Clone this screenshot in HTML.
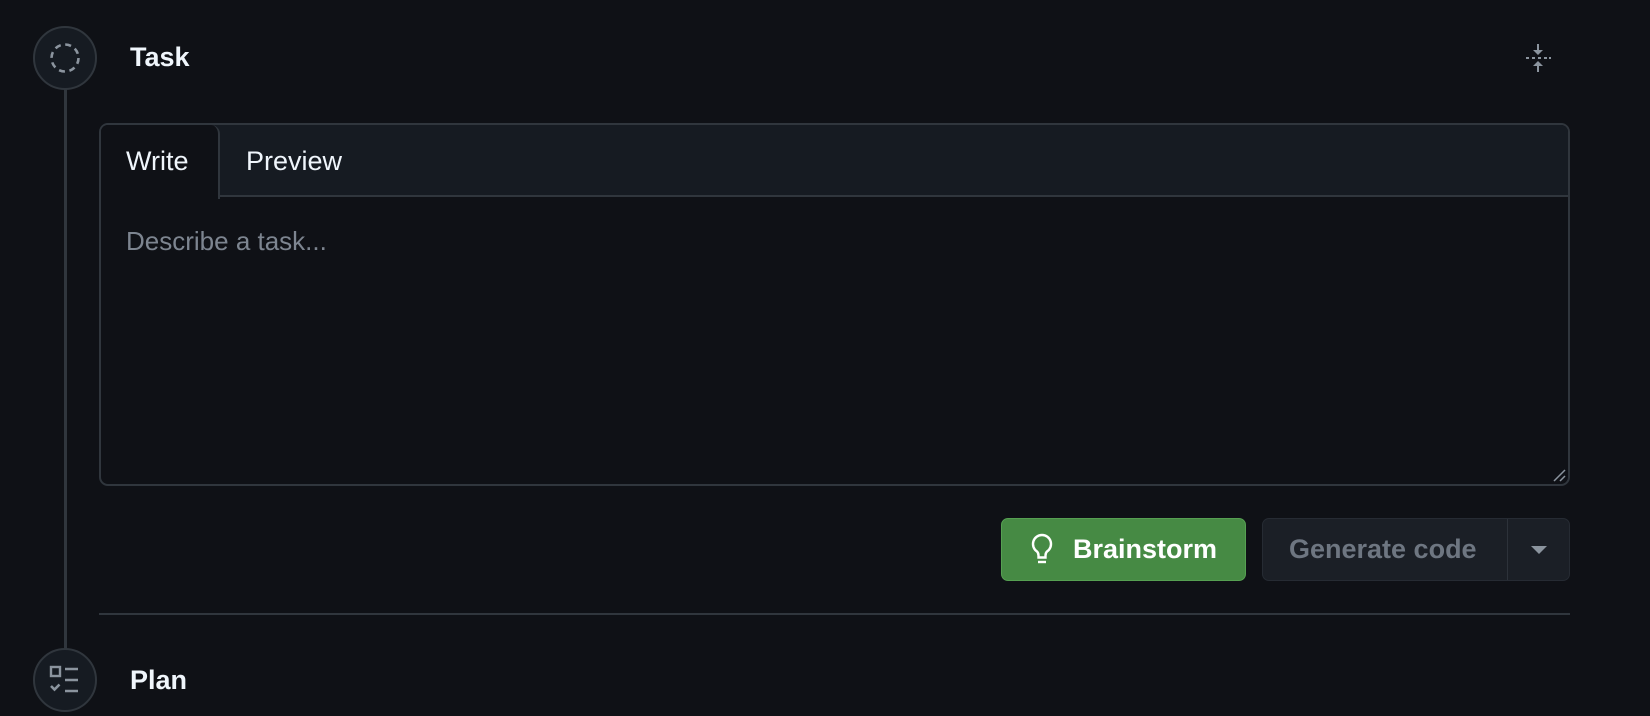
<!DOCTYPE html>
<html><head><meta charset="utf-8"><style>
*{box-sizing:border-box;margin:0;padding:0}
body{width:1650px;height:716px;background:#0f1116;font-family:"Liberation Sans",sans-serif;overflow:hidden;position:relative;color:#f0f6fc}
.abs{position:absolute}
.circ{position:absolute;width:64px;height:64px;border-radius:50%;border:2px solid #30363d;background:#161b22;display:flex;align-items:center;justify-content:center}
.title{position:absolute;font-size:27px;font-weight:bold;color:#f0f6fc}
</style></head><body>
<div class="abs" style="left:64px;top:88px;width:3px;height:562px;background:#30363d"></div>
<div class="circ" style="left:33px;top:26px"><svg width="34" height="34" viewBox="0 0 34 34"><circle cx="17" cy="17" r="13.5" fill="none" stroke="#8b949e" stroke-width="2.6" stroke-dasharray="6 4.6"/></svg></div>
<div class="title" style="left:130px;top:42px">Task</div>
<svg class="abs" style="left:1524px;top:42px" width="28" height="32" viewBox="0 0 28 32"><g fill="#8b949e"><path d="M14 2v8" stroke="#8b949e" stroke-width="2"/><path d="M9 8h10l-5 5z"/><path d="M14 22v8" stroke="#8b949e" stroke-width="2"/><path d="M9 24h10l-5-5z"/><rect x="2" y="15" width="3" height="2"/><rect x="8" y="15" width="3" height="2"/><rect x="14" y="15" width="3" height="2"/><rect x="20" y="15" width="3" height="2"/><rect x="25" y="15" width="2" height="2"/></g></svg>
<div class="abs" style="left:99px;top:123px;width:1471px;height:363px;border:2px solid #30363d;border-radius:9px;overflow:hidden">
  <div class="abs" style="left:0;top:0;right:0;height:72px;background:#161b22;border-bottom:2px solid #30363d"></div>
  <div class="abs" style="left:0;top:0;width:119px;height:74px;background:#0f1116;border-right:2px solid #30363d;border-top-right-radius:9px"></div>
  <div class="abs" style="left:25px;top:21px;font-size:27px;color:#f0f6fc">Write</div>
  <div class="abs" style="left:145px;top:21px;font-size:27px;color:#f0f6fc">Preview</div>
  <div class="abs" style="left:25px;top:101px;font-size:26px;color:#7d8590">Describe a task...</div>
  <svg class="abs" style="right:2px;bottom:2px" width="14" height="14"><path d="M2 13L13 2M8 13L13 8" stroke="#8b949e" stroke-width="1.5"/></svg>
</div>
<div class="abs" style="left:1001px;top:518px;width:245px;height:63px;background:#468a44;border:1px solid #56a052;border-radius:7px;display:flex;align-items:center">
  <svg style="margin-left:27px" width="26" height="36" viewBox="0 0 26 36"><path d="M13 3a9 9 0 0 0-5 16.5c1 1 1.5 2 1.5 4v2h7v-2c0-2 .5-3 1.5-4A9 9 0 0 0 13 3z" fill="none" stroke="#fff" stroke-width="2.4"/><path d="M9 30h8" stroke="#fff" stroke-width="2.4"/></svg>
  <span style="margin-left:18px;font-size:27px;font-weight:bold;color:#fff">Brainstorm</span>
</div>
<div class="abs" style="left:1262px;top:518px;width:308px;height:63px;background:#1b1f26;border:1px solid #262b33;border-radius:7px">
  <div class="abs" style="left:26px;top:15px;font-size:27px;font-weight:bold;color:#6e7681">Generate code</div>
  <div class="abs" style="left:244px;top:0;width:1px;height:61px;background:#2d323a"></div>
  <svg class="abs" style="left:268px;top:26px" width="16" height="10"><path d="M0 1h16l-8 8z" fill="#8b949e"/></svg>
</div>
<div class="abs" style="left:99px;top:613px;width:1471px;height:2px;background:#30363d"></div>
<div class="circ" style="left:33px;top:648px"><svg width="34" height="34" viewBox="0 0 34 34"><rect x="3" y="4" width="9" height="9" fill="none" stroke="#8b949e" stroke-width="2.4"/><path d="M17 6h13M17 17h13M17 28h13M3 23l3.5 3.5 5-5" fill="none" stroke="#8b949e" stroke-width="2.6"/></svg></div>
<div class="title" style="left:130px;top:665px">Plan</div>
</body></html>
